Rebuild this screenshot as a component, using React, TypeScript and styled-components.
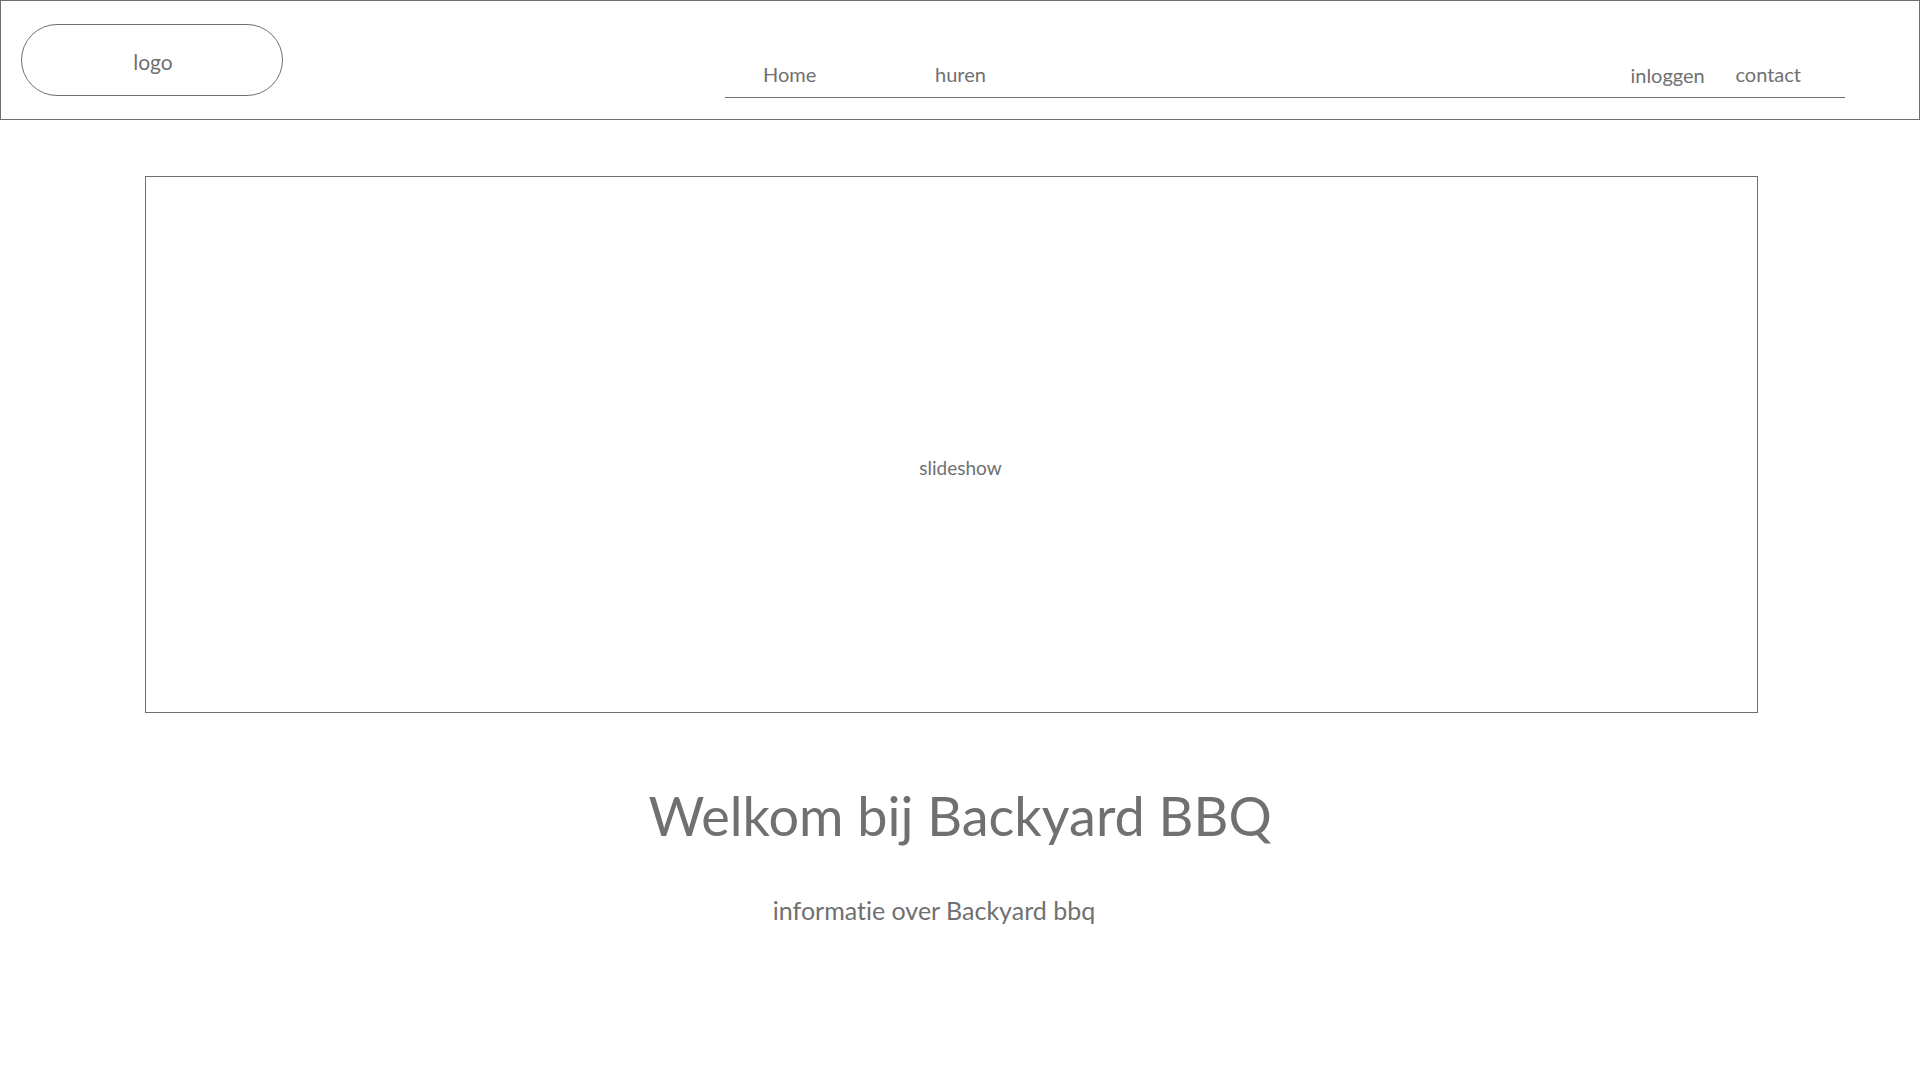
import React from "react";
import styled, { createGlobalStyle } from "styled-components";

const Global = createGlobalStyle`
  html, body { margin: 0; padding: 0; background: #ffffff; }
  body {
    font-family: Lato, "Open Sans", sans-serif;
    color: #707070;
    font-variant-ligatures: none;
    font-feature-settings: "liga" 0, "clig" 0, "dlig" 0;
  }
  * { box-sizing: border-box; }
`;

const Page = styled.div`
  width: 1920px;
  height: 1080px;
  background: #fff;
  display: flex;
  flex-direction: column;
`;

const Header = styled.header`
  width: 1920px;
  height: 120px;
  border: 1px solid #707070;
  display: flex;
  align-items: flex-start;
  padding: 23px 0 0 20px;
`;

const Logo = styled.div`
  width: 262px;
  height: 72px;
  border: 1px solid #707070;
  border-radius: 36px;
  display: flex;
  align-items: center;
  justify-content: center;
  font-size: 21px;
  padding: 2px 0 0 2px;
`;

const Nav = styled.nav`
  margin-left: 442px;
  width: 1120px;
  height: 74px;
  border-bottom: 1px solid #707070;
  display: flex;
  align-items: flex-end;
  padding: 0 44px 11px 38px;
`;

const NavLink = styled.a<{ $w?: number; $low?: boolean }>`
  display: block;
  width: ${(p) => (p.$w ? `${p.$w}px` : "auto")};
  font-size: 20px;
  line-height: 24px;
  margin-bottom: ${(p) => (p.$low ? "-1px" : "0")};
  color: #707070;
  text-decoration: none;
`;

const Spacer = styled.div`
  flex: 1;
`;

const Slideshow = styled.section`
  margin: 56px 0 0 145px;
  width: 1613px;
  height: 537px;
  border: 1px solid #707070;
  display: flex;
  align-items: center;
  justify-content: center;
  padding: 46px 0 0 18px;
  font-size: 19px;
`;

const Title = styled.h1`
  margin: 71px 0 0 0;
  text-align: center;
  font-weight: 400;
  font-size: 54px;
  line-height: 64px;
  color: #707070;
`;

const Subtitle = styled.p`
  margin: 47px 0 0 0;
  text-align: center;
  padding-right: 52px;
  font-size: 25px;
  line-height: 30px;
  color: #707070;
`;

export default function App() {
  return (
    <Page>
      <Global />
      <Header>
        <Logo>logo</Logo>
        <Nav>
          <NavLink $w={172}>Home</NavLink>
          <NavLink>huren</NavLink>
          <Spacer />
          <NavLink $w={105} $low>inloggen</NavLink>
          <NavLink>contact</NavLink>
        </Nav>
      </Header>
      <Slideshow>slideshow</Slideshow>
      <Title>Welkom bij Backyard BBQ</Title>
      <Subtitle>informatie over Backyard bbq</Subtitle>
    </Page>
  );
}
